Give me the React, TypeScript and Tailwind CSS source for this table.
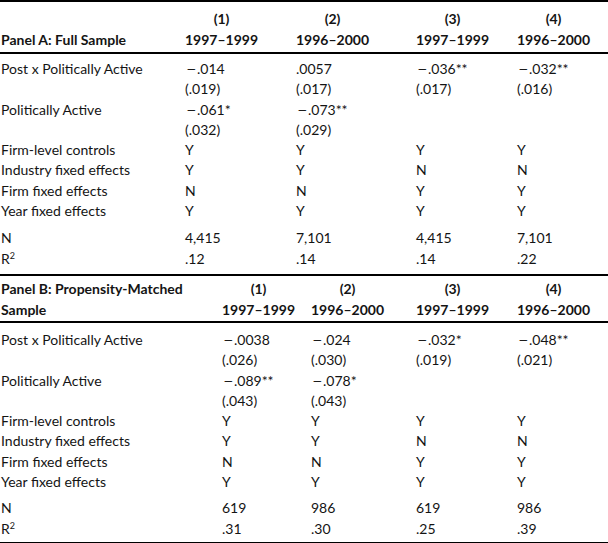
type Cell = string;

const panelA = {
  cols: "grid-cols-[185px_111px_120px_101px_1fr]",
  heads: [
    ["(1)", "1997–1999"],
    ["(2)", "1996–2000"],
    ["(3)", "1997–1999"],
    ["(4)", "1996–2000"],
  ],
  coef: [
    ["Post x Politically Active", "−.014", ".0057", "−.036**", "−.032**"],
    ["", "(.019)", "(.017)", "(.017)", "(.016)"],
    ["Politically Active", "−.061*", "−.073**", "", ""],
    ["", "(.032)", "(.029)", "", ""],
    ["Firm-level controls", "Y", "Y", "Y", "Y"],
    ["Industry fixed effects", "Y", "Y", "N", "N"],
    ["Firm fixed effects", "N", "N", "Y", "Y"],
    ["Year fixed effects", "Y", "Y", "Y", "Y"],
  ],
  stats: [
    ["N", "4,415", "7,101", "4,415", "7,101"],
    ["R2", ".12", ".14", ".14", ".22"],
  ],
};

const panelB = {
  cols: "grid-cols-[222px_89px_105px_101px_1fr]",
  heads: panelA.heads,
  coef: [
    ["Post x Politically Active", "−.0038", "−.024", "−.032*", "−.048**"],
    ["", "(.026)", "(.030)", "(.019)", "(.021)"],
    ["Politically Active", "−.089**", "−.078*", "", ""],
    ["", "(.043)", "(.043)", "", ""],
    ["Firm-level controls", "Y", "Y", "Y", "Y"],
    ["Industry fixed effects", "Y", "Y", "N", "N"],
    ["Firm fixed effects", "N", "N", "Y", "Y"],
    ["Year fixed effects", "Y", "Y", "Y", "Y"],
  ],
  stats: [
    ["N", "619", "986", "619", "986"],
    ["R2", ".31", ".30", ".25", ".39"],
  ],
};

// renders a cell value, giving the minus sign the wider set of the original
function Value({ v }: { v: string }) {
  if (v === "R2")
    return (
      <>
        R<sup className="text-[9px]">2</sup>
      </>
    );
  if (v.startsWith("−"))
    return (
      <>
        <span className="inline-block w-[12px] pl-[1px] scale-x-125 origin-left">−</span>
        {v.slice(1)}
      </>
    );
  return <>{v}</>;
}

function Row({ cells, cols }: { cells: Cell[]; cols: string }) {
  return (
    <div className={`grid ${cols} leading-[20.3px] h-[20.3px]`}>
      {cells.map((c, i) => (
        <div key={i} className={i === 0 ? "pl-[1px] whitespace-nowrap" : "whitespace-nowrap"}>
          <Value v={c} />
        </div>
      ))}
    </div>
  );
}

function Heads({ heads }: { heads: string[][] }) {
  return (
    <>
      {heads.map(([n, y]) => (
        <div key={n}>
          <div className="inline-flex flex-col items-center">
            <span>{n}</span>
            <span>{y}</span>
          </div>
        </div>
      ))}
    </>
  );
}

export default function App() {
  return (
    <div
      className="w-[608px] h-[543px] bg-white text-[#141414] text-[14px] overflow-hidden"
      style={{ fontFamily: "Lato, Roboto, sans-serif" }}
    >
      {/* Panel A */}
      <div className="border-t-2 border-black">
        <div className={`grid ${panelA.cols} font-bold leading-[21px] pt-[6px] pb-[2px] border-b-2 border-black`}>
          <div className="pl-[1px] self-end whitespace-nowrap">Panel A: Full Sample</div>
          <Heads heads={panelA.heads} />
        </div>
        <div className="pt-[5px]">
          {panelA.coef.map((r, i) => (
            <Row key={i} cells={r} cols={panelA.cols} />
          ))}
        </div>
        <div className="pt-[7px] pb-[5px]">
          {panelA.stats.map((r, i) => (
            <Row key={i} cells={r} cols={panelA.cols} />
          ))}
        </div>
      </div>

      {/* Panel B */}
      <div className="border-t-2 border-black border-b-2">
        <div className={`grid ${panelB.cols} font-bold leading-[21px] pt-[2px] pb-[1px] border-b-2 border-black`}>
          <div className="pl-[1px] whitespace-nowrap">
            Panel B: Propensity-Matched
            <br />
            Sample
          </div>
          <Heads heads={panelB.heads} />
        </div>
        <div className="pt-[7px]">
          {panelB.coef.map((r, i) => (
            <Row key={i} cells={r} cols={panelB.cols} />
          ))}
        </div>
        <div className="pt-[6px] pb-[3px]">
          {panelB.stats.map((r, i) => (
            <Row key={i} cells={r} cols={panelB.cols} />
          ))}
        </div>
      </div>
    </div>
  );
}
